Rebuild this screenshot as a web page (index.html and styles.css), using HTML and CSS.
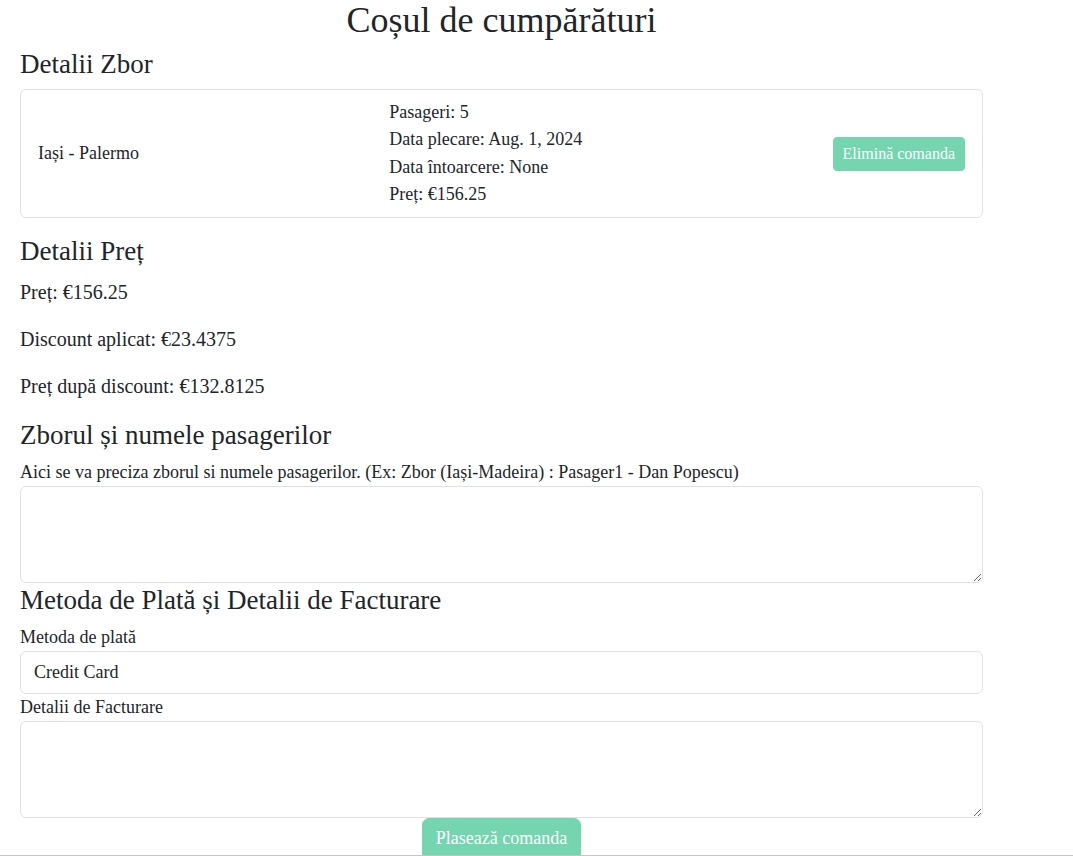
FILE: index.html
```html
<!DOCTYPE html>
<html lang="ro">
<head>
<meta charset="utf-8">
<title>Coșul de cumpărături</title>
<link rel="stylesheet" href="styles.css">
</head>
<body>
<main class="container">
  <h1 class="page-title">Coșul de cumpărături</h1>

  <h2 class="section-title">Detalii Zbor</h2>
  <div class="card">
    <div class="card-body">
      <div class="route">Iași - Palermo</div>
      <div class="details">
        <div>Pasageri: 5</div>
        <div>Data plecare: Aug. 1, 2024</div>
        <div>Data întoarcere: None</div>
        <div>Preț: €156.25</div>
      </div>
      <button class="btn btn-sm" type="button">Elimină comanda</button>
    </div>
  </div>

  <h2 class="section-title">Detalii Preț</h2>
  <div class="price-block">
    <p class="price-line">Preț: €156.25</p>
    <p class="price-line">Discount aplicat: €23.4375</p>
    <p class="price-line">Preț după discount: €132.8125</p>
  </div>

  <h2 class="section-title">Zborul și numele pasagerilor</h2>
  <form class="order-form">
    <label class="form-label" for="pasageri">Aici se va preciza zborul si numele pasagerilor. (Ex: Zbor (Iași-Madeira) : Pasager1 - Dan Popescu)</label>
    <textarea id="pasageri" class="form-control textarea"></textarea>

    <h2 class="section-title section-title-form">Metoda de Plată și Detalii de Facturare</h2>
    <label class="form-label" for="metoda">Metoda de plată</label>
    <input id="metoda" class="form-control input" type="text" value="Credit Card">
    <label class="form-label label-after-input" for="factura">Detalii de Facturare</label>
    <textarea id="factura" class="form-control textarea"></textarea>

    <div class="submit-row">
      <button class="btn btn-lg" type="submit">Plasează comanda</button>
    </div>
  </form>
</main>
<div class="bottom-edge"></div>
</body>
</html>
```
FILE: styles.css
```css
* { box-sizing: border-box; }
html, body { margin: 0; padding: 0; }
body {
  font-family: "Liberation Serif", "Times New Roman", serif;
  font-size: 18px;
  line-height: 1.5;
  color: #212529;
  background: #fff;
}
.container {
  width: 963px;
  margin-left: 20px;
}
.page-title {
  margin: 0 0 7.6px;
  font-size: 36px;
  font-weight: 400;
  line-height: 40px;
  text-align: center;
}
.section-title {
  margin: 0 0 9px;
  font-size: 27px;
  font-weight: 400;
  line-height: 1.2;
}
.section-title-form { margin-top: 1px; }
.card {
  border: 1px solid #dee2e6;
  border-radius: 6px;
  margin-bottom: 17px;
}
.card-body {
  display: flex;
  justify-content: space-between;
  align-items: center;
  padding: 9px 17px;
}
.details { line-height: 27.3px; }
.btn {
  font-family: inherit;
  border: 1px solid #75d5b0;
  background: #75d5b0;
  color: #fff;
  cursor: pointer;
}
.btn-sm {
  font-size: 16px;
  line-height: 24px;
  padding: 4px 9px;
  border-radius: 4px;
}
.btn-lg {
  font-size: 18px;
  line-height: 1.5;
  padding: 6px 13px;
  border-radius: 7px 7px 0 0;
  height: 40px;
}
.price-block { margin-bottom: 18px; }
.price-line {
  margin: 0 0 17px;
  font-size: 20px;
  line-height: 30px;
}
.price-line:last-child { margin-bottom: 0; }
.form-label {
  display: block;
  font-size: 18px;
  line-height: 24px;
  margin-bottom: 2px;
}
.label-after-input { margin-top: 1px; }
.form-control {
  display: block;
  width: 100%;
  font-family: inherit;
  font-size: 18px;
  color: #212529;
  border: 1px solid #dee2e6;
  border-radius: 6px;
  background: #fff;
}
.textarea {
  height: 97px;
  resize: vertical;
  margin: 0;
}
.input {
  height: 43px;
  padding: 6px 13px;
  margin-bottom: 0;
}
.submit-row {
  display: flex;
  justify-content: center;
}
.bottom-edge {
  position: fixed;
  left: 0;
  right: 0;
  bottom: 0;
  height: 1px;
  background: #c4c4c4;
}
```
